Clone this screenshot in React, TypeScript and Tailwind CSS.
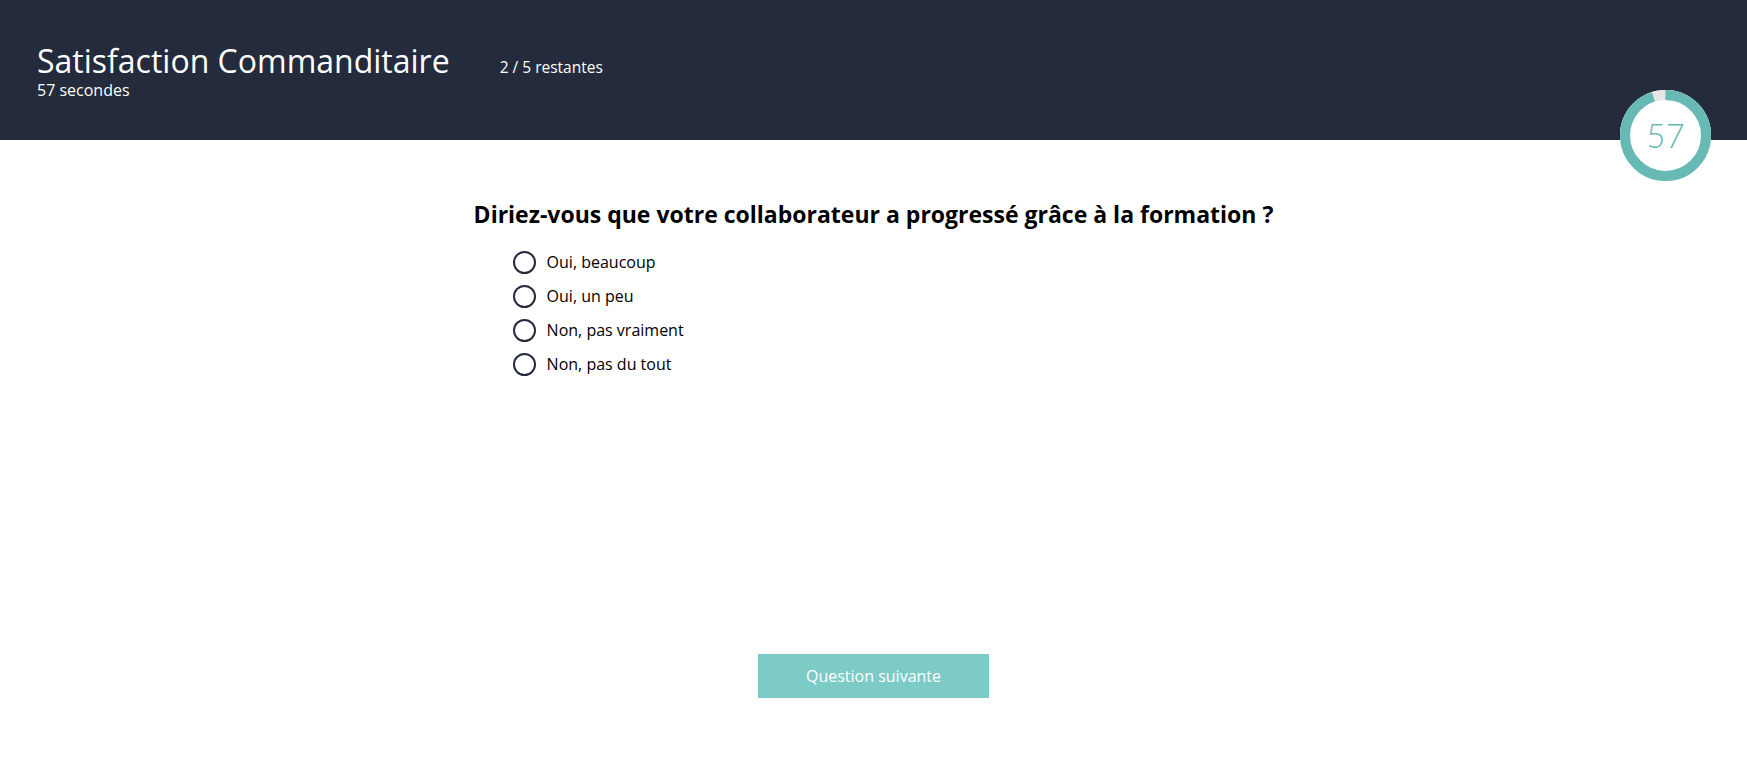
import { useState } from 'react';

const options = ['Oui, beaucoup', 'Oui, un peu', 'Non, pas vraiment', 'Non, pas du tout'];

// anneau du minuteur (57 / 60 secondes)
function Timer({ seconds, total }: { seconds: number; total: number }) {
  const r = 40.5;
  const c = 2 * Math.PI * r;
  const done = c * (seconds / total);
  return (
    <div className="absolute right-[36px] top-[90px] h-[91px] w-[91px]">
      <svg width="91" height="91" viewBox="0 0 91 91" className="absolute inset-0">
        <circle cx="45.5" cy="45.5" r="45.5" fill="#ffffff" />
        <circle cx="45.5" cy="45.5" r={r} fill="none" stroke="#e6e6e6" strokeWidth="10" />
        <circle
          cx="45.5"
          cy="45.5"
          r={r}
          fill="none"
          stroke="#67b9b4"
          strokeWidth="10"
          strokeDasharray={`${done} ${c}`}
          transform="rotate(-90 45.5 45.5)"
        />
      </svg>
      <div className="absolute inset-0 flex items-center justify-center font-['Lato',sans-serif] text-[33px] font-light text-[#67b9b4]">
        {seconds}
      </div>
    </div>
  );
}

export default function App() {
  const [selected, setSelected] = useState<number | null>(null);

  return (
    <div className="relative min-h-[760px] bg-white font-['Open_Sans',sans-serif] text-black">
      <header className="flex h-[140px] items-start bg-[#232b3c] px-[37px] pt-[42px] text-white">
        <div>
          <h1 className="text-[32px] font-normal leading-[38px]">Satisfaction Commanditaire</h1>
          <p className="text-[16px] leading-[20px]">57 secondes</p>
        </div>
        <p className="ml-[50px] mt-[14px] text-[15.5px]">2 / 5 restantes</p>
      </header>

      <Timer seconds={57} total={60} />

      <main className="flex flex-col items-center pt-[59px]">
        <div className="w-fit">
          <h2 className="text-[23px] font-bold leading-[30px]">
            Diriez-vous que votre collaborateur a progressé grâce à la formation ?
          </h2>
          <ul className="mt-[16px] flex flex-col pl-[39px]">
            {options.map((o, i) => (
              <li key={o}>
                <label className="flex h-[34px] cursor-pointer items-center gap-[11px] text-[16px]">
                  <span className="flex h-[23px] w-[23px] items-center justify-center rounded-full border-2 border-[#232b3c]">
                    {selected === i && <span className="h-[11px] w-[11px] rounded-full bg-[#232b3c]" />}
                  </span>
                  <input
                    type="radio"
                    name="q"
                    className="hidden"
                    checked={selected === i}
                    onChange={() => setSelected(i)}
                  />
                  {o}
                </label>
              </li>
            ))}
          </ul>
        </div>

        <button className="mt-[273px] h-[44px] w-[231px] bg-[#7ccbc6] text-[16px] text-white">
          Question suivante
        </button>
      </main>
    </div>
  );
}
